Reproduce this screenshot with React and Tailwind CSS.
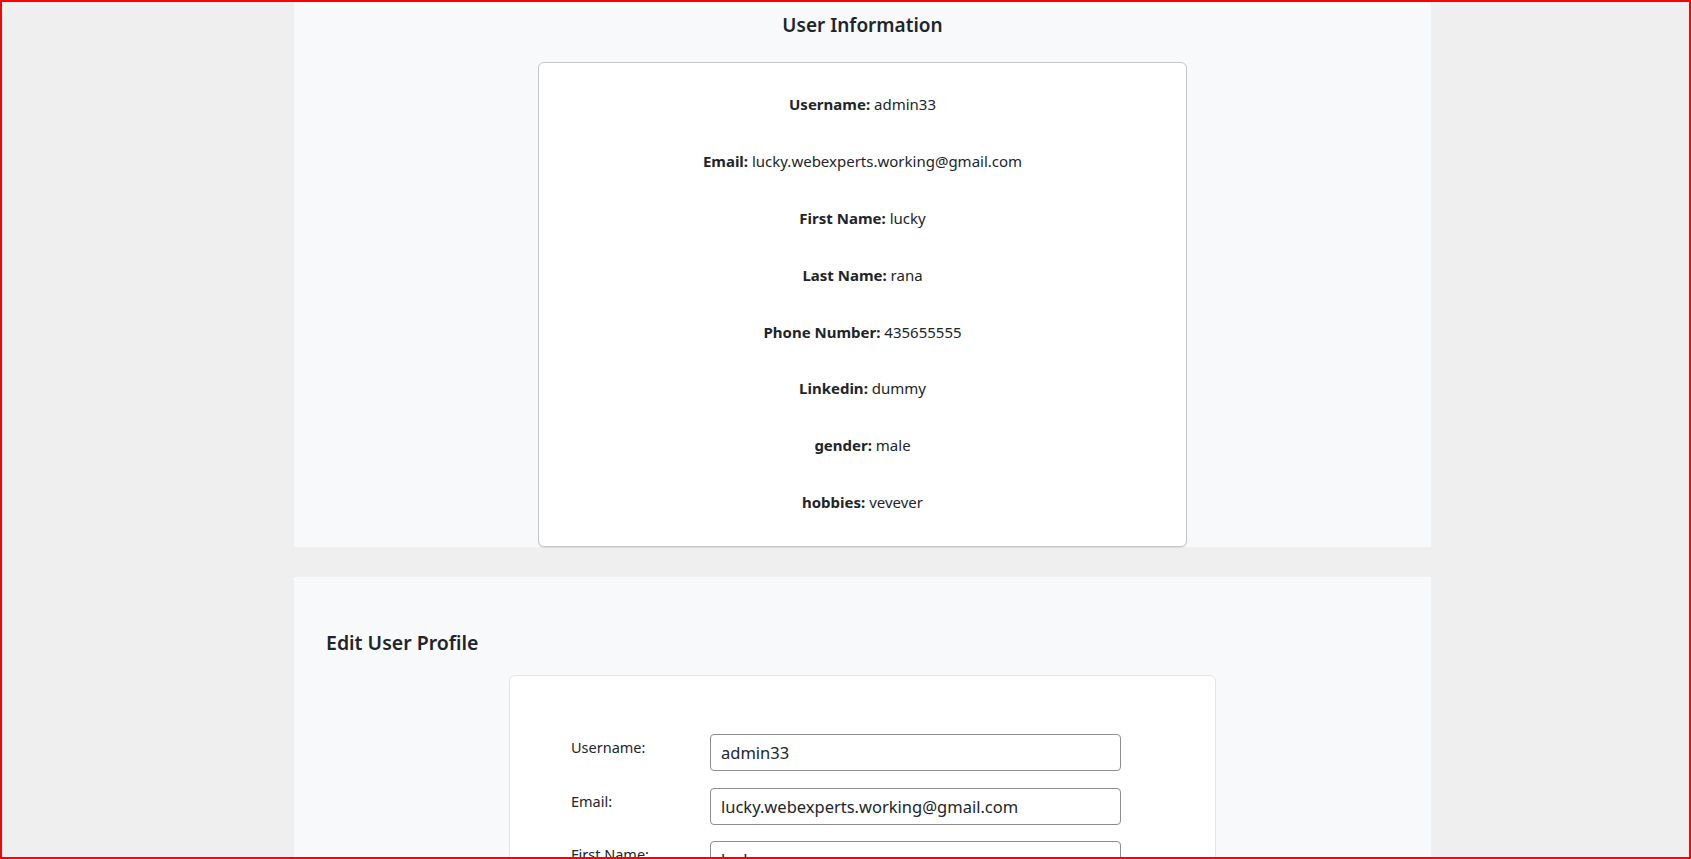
import { useState } from "react"

const info = [
  ["Username", "admin33"],
  ["Email", "lucky.webexperts.working@gmail.com"],
  ["First Name", "lucky"],
  ["Last Name", "rana"],
  ["Phone Number", "435655555"],
  ["Linkedin", "dummy"],
  ["gender", "male"],
  ["hobbies", "vevever"],
]

const fields = [
  ["Username", "username"],
  ["Email", "email"],
  ["First Name", "firstName"],
  ["Last Name", "lastName"],
  ["Phone Number", "phone"],
]

export default function App() {
  const [form, setForm] = useState({
    username: "admin33",
    email: "lucky.webexperts.working@gmail.com",
    firstName: "lucky",
    lastName: "rana",
    phone: "435655555",
  })

  const onChange = (e) => {
    setForm((prev) => ({ ...prev, [e.target.name]: e.target.value }))
  }

  return (
    <div className="min-h-screen bg-[#efefef] font-['Noto_Sans',sans-serif] text-[#212529]">
      <div className="pointer-events-none fixed inset-0 z-50 border-2 border-[#ff0000]" />

      <div className="ml-[294px] w-[1137px] h-[859px] overflow-hidden">
        {/* user info */}
        <section className="bg-[#f8f9fa] pt-[11px] flex flex-col items-center">
          <h2 className="text-[19px] leading-[28px] font-semibold">User Information</h2>
          <div className="mt-[23px] w-[649px] bg-white border border-[#c6c6ca] rounded-[6px] shadow-[0_1px_1px_rgba(0,0,0,0.08)] pt-[29px] pb-[32px] flex flex-col items-center gap-[32.9px]">
            {info.map(([label, value]) => (
              <p key={label} className="text-[15px] leading-[24px]">
                <span className="font-bold">{label}:</span> {value}
              </p>
            ))}
          </div>
        </section>

        {/* edit profile */}
        <section className="mt-[30px] bg-[#f8f9fa] px-[32px] pt-[52px] pb-10">
          <h2 className="text-[19.5px] leading-[28px] font-semibold">Edit User Profile</h2>
          <div className="mx-auto mt-[18px] w-[707px] bg-white border border-[#e3e5e8] rounded-[6px] pt-[58px] pl-[61px] pb-10">
            <form className="flex flex-col gap-[16.5px]">
              {fields.map(([label, name]) => (
                <div key={name} className="flex items-start">
                  <label className="w-[139px] pt-[2px] text-[14.5px] leading-[22px]">{label}:</label>
                  <input
                    name={name}
                    value={form[name]}
                    onChange={onChange}
                    className="w-[411px] h-[37px] px-[10px] border border-[#8d8d8d] rounded-[4px] text-[16.5px] text-[#212529] bg-white outline-none"
                  />
                </div>
              ))}
            </form>
          </div>
        </section>
      </div>
    </div>
  )
}
